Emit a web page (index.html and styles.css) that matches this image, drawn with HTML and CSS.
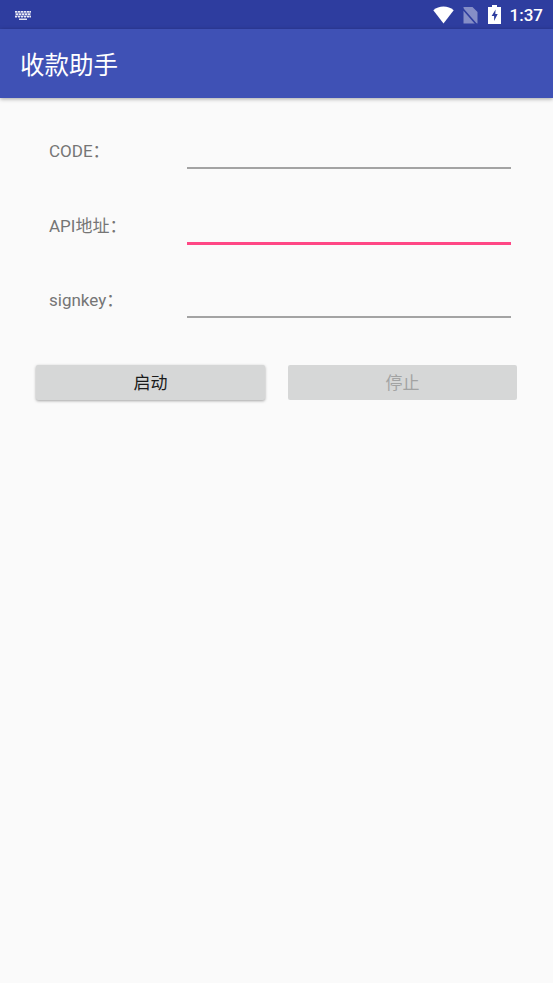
FILE: index.html
```html
<!DOCTYPE html>
<html lang="zh">

<head>
    <meta charset="UTF-8">
    <title>收款助手</title>
    <link rel="stylesheet" href="styles.css">
</head>

<body>
    <div class="status-bar">
        <svg class="kbd" width="18" height="10" viewBox="0 0 18 10">
            <g fill="#fff" fill-opacity="0.85">
                <path d="M1 1h16v6H1z" fill-opacity="0.35"/>
                <path d="M1 1h2v1.500H1zM4 1h2v1.500H4zM7 1h2v1.500H7zM10 1h2v1.500h-2zM13 1h2v1.500h-2zM15.500 1H17v1.500h-1.500z"/>
                <path d="M2 3.500h2V5H2zM5 3.500h2V5H5zM8 3.500h2V5H8zM11 3.500h2V5h-2zM14 3.500h2V5h-2z"/>
                <path d="M1 6h2v1.500H1zM4 6h2v1.500H4zM7 6h2v1.500H7zM10 6h2v1.500h-2zM13 6h2v1.500h-2zM15.500 6H17v1.500h-1.500z"/>
                <path d="M5 8.500h8V10H5z"/>
            </g>
        </svg>
        <div class="status-right">
            <svg class="wifi" width="21" height="18" viewBox="0 0 21 18">
                <path d="M0.300 4.200C3.200 1.800 6.700 0.500 10.500 0.500s7.300 1.300 10.200 3.700L10.500 17.500z" fill="#fff"/>
            </svg>
            <svg class="sim" width="15" height="18" viewBox="0 0 15 18">
                <path d="M0.500 1H9.500L14.500 6V17.500H0.500z" fill="#fff" fill-opacity="0.42"/>
                <path d="M-0.500 2.500L13.500 18.500" stroke="#2e3d9f" stroke-width="1.600"/>
            </svg>
            <svg class="batt" width="13" height="19" viewBox="0 0 13 19">
                <path fill-rule="evenodd" d="M4 0h5v2h4v17H0V2h4zM7.600 4.500L3.600 11h2.500v5l3.600-7H7.300z" fill="#fff"/>
            </svg>
            <span class="clock">1:37</span>
        </div>
    </div>
    <div class="app-bar">收款助手</div>

    <div class="form">
        <div class="row">
            <label class="label">CODE：</label>
            <div class="line"></div>
        </div>
        <div class="row">
            <label class="label">API地址：</label>
            <div class="line focus"></div>
        </div>
        <div class="row">
            <label class="label">signkey：</label>
            <div class="line"></div>
        </div>
    </div>

    <div class="buttons">
        <div class="btn">启动</div>
        <div class="btn off">停止</div>
    </div>
</body>

</html>
```

FILE: styles.css
```css
* {
    margin: 0;
    padding: 0;
    box-sizing: border-box;
}

html, body {
    height: 100%;
}

body {
    width: 553px;
    height: 983px;
    overflow: hidden;
    background-color: #fafafa;
    font-family: "Roboto", "Noto Sans CJK SC", sans-serif;
}

.status-bar {
    display: flex;
    align-items: center;
    justify-content: space-between;
    height: 29px;
    padding: 0 10px 0 14px;
    background-color: #2e3d9f;
}

.status-right {
    display: flex;
    align-items: center;
}

.wifi {
    margin-right: 9px;
}

.sim {
    margin-right: 10px;
}

.batt {
    margin-right: 9px;
}

.clock {
    color: #fff;
    font-size: 17px;
    font-weight: 500;
}

.app-bar {
    height: 69px;
    padding-left: 20px;
    line-height: 73px;
    color: #fff;
    font-size: 24.500px;
    background-color: #3f51b5;
    box-shadow: 0 1px 4px rgba(0,0,0,0.35);
}

.form {
    padding: 36px 42px 0 49px;
}

.row {
    display: flex;
    height: 74.500px;
}

.label {
    width: 138px;
    padding-top: 6px;
    line-height: 22px;
    color: #757575;
    font-size: 17px;
}

.line {
    flex: 1;
    height: 35px;
    border-bottom: 2px solid #a3a3a3;
}

.focus {
    height: 36px;
    border-bottom: 3px solid #ff4785;
}

.buttons {
    display: flex;
    gap: 23px;
    padding: 0 36px;
    margin-top: 7.500px;
}

.btn {
    width: 229px;
    height: 35px;
    line-height: 36px;
    text-align: center;
    color: #1a1a1a;
    font-size: 17px;
    background-color: #d6d7d7;
    border-radius: 2px;
    box-shadow: 0 1px 3px rgba(0,0,0,0.35);
}

.off {
    color: #a2a3a3;
    box-shadow: none;
}
```
